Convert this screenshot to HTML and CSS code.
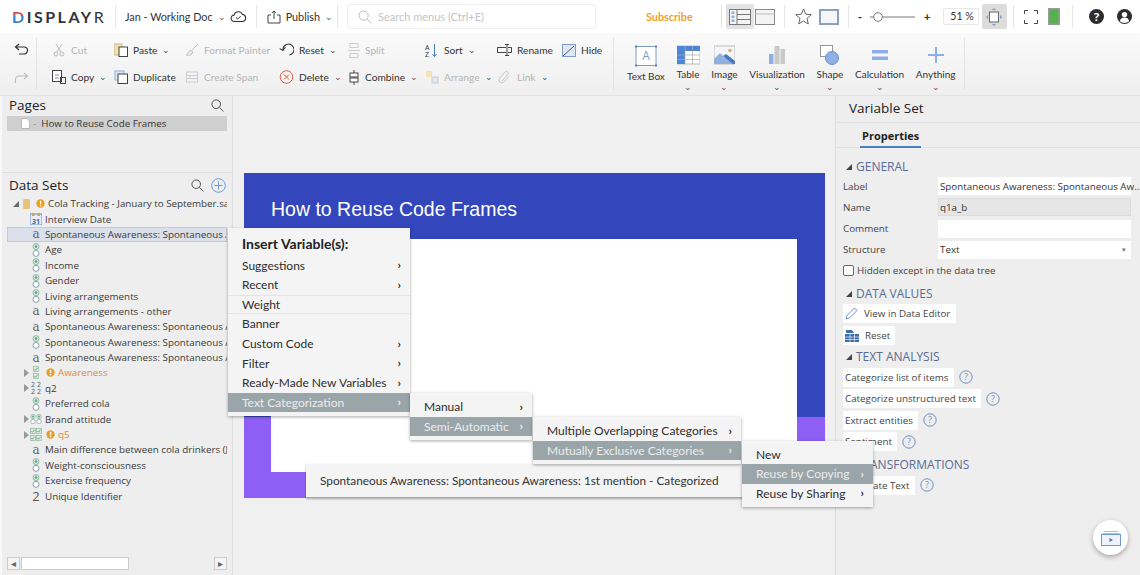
FILE: index.html
```html
<!DOCTYPE html>
<html lang="en">
<head>
    <meta charset="UTF-8">
    <title>Displayr</title>
    <link rel="stylesheet" href="styles.css">
</head>
<body>
<svg class="defs" width="0" height="0">
    <symbol id="radio" viewBox="0 0 8 14"><circle cx="4" cy="3.6" r="3" fill="#d8ecdf" stroke="#8fb8a4"/><circle cx="4" cy="3.6" r="1.3" fill="#5fa582"/><circle cx="4" cy="10.4" r="3" fill="#fff" stroke="#8aa0ad"/></symbol>
    <symbol id="warn" viewBox="0 0 10 10"><circle cx="5" cy="5" r="4.6" fill="#e8a020"/><rect x="4.3" y="2" width="1.5" height="3.8" fill="#fff"/><rect x="4.3" y="6.6" width="1.5" height="1.5" fill="#fff"/></symbol>
    <symbol id="help" viewBox="0 0 14 14"><circle cx="7" cy="7" r="6.2" fill="none" stroke="#6f8fc4"/><text x="7" y="10.2" text-anchor="middle" font-size="9" font-family="Open Sans" fill="#6f8fc4">?</text></symbol>
    <symbol id="check" viewBox="0 0 6 6"><rect x=".4" y=".4" width="5.2" height="5.2" fill="#dcebe0" stroke="#8fb8a4" stroke-width=".7"/><path d="M1.4 3l1.1 1.2L4.6 1.8" fill="none" stroke="#4f9a72" stroke-width=".8"/></symbol>
</svg>
<div class="app">
    <header class="topbar">
        <div class="logo"><span class="logo-d">D</span>ISPLAY<span class="logo-r">R</span></div>
        <span class="sep sep-doc"></span>
        <span class="doc-name">Jan - Working Doc</span><span class="caret">&#8964;</span>
        <svg class="cloud" width="17" height="13" viewBox="0 0 17 13"><path d="M4.5 11.5a3.2 3.2 0 0 1-.4-6.4 4.4 4.4 0 0 1 8.3-.7 3.6 3.6 0 0 1 .4 7.1z" fill="none" stroke="#333" stroke-width="1.1"/><path d="M6 7.5l1.7 1.6 3-3" fill="none" stroke="#333" stroke-width="1"/></svg>
        <span class="sep sep-pub"></span>
        <svg class="pub-icon" width="14" height="14" viewBox="0 0 14 14"><path d="M4 5H1v8h12V5h-3M7 9V1M4.8 3L7 1l2.2 2" fill="none" stroke="#444"/></svg>
        <span class="publish">Publish</span><span class="caret">&#8964;</span>
        <span class="sep sep-search"></span>
        <div class="search">
            <svg width="14" height="14" viewBox="0 0 14 14"><circle cx="5.6" cy="5.6" r="4.6" fill="none" stroke="#bbb"/><path d="M9 9l4.4 4.4" stroke="#bbb"/></svg>
            <span>Search menus (Ctrl+E)</span>
        </div>
        <span class="subscribe">Subscribe</span>
        <span class="sep sep-view"></span>
        <div class="view-btn view-on"><svg width="22" height="16" viewBox="0 0 22 16"><rect x=".5" y=".5" width="21" height="15" fill="#f4f4f4" stroke="#777"/><path d="M8 .5v15M8 5.5h13.5M8 10.500h13.500" stroke="#777"/><rect x="2.500" y="2.500" width="3" height="2.500" fill="#8fb0dc"/><rect x="2.500" y="6.500" width="3" height="2.500" fill="#8fb0dc"/><rect x="2.500" y="10.500" width="3" height="2.500" fill="#8fb0dc"/></svg></div>
        <svg class="view-two" width="20" height="16" viewBox="0 0 20 16"><rect x=".5" y=".5" width="19" height="15" fill="#f4f4f4" stroke="#888"/><path d="M.5 5h19" stroke="#bbb"/></svg>
        <span class="sep sep-star"></span>
        <svg class="star" width="17" height="17" viewBox="0 0 17 17"><path d="M8.500 1l2.200 5.200 5.600.5-4.300 3.700 1.300 5.500-4.800-2.900-4.800 2.900 1.300-5.500L.7 6.700l5.600-.5z" fill="none" stroke="#666"/></svg>
        <svg class="frame" width="20" height="16" viewBox="0 0 20 16"><rect x="1" y="1" width="18" height="14" fill="#f6f6f6" stroke="#8aa0c0" stroke-width="2"/></svg>
        <span class="sep sep-zoom"></span>
        <span class="zoom-sign">-</span>
        <svg class="slider" width="45" height="12" viewBox="0 0 45 12"><path d="M0 6h45" stroke="#777"/><circle cx="8" cy="6" r="4.300" fill="#fff" stroke="#777"/></svg>
        <span class="zoom-sign zoom-plus">+</span>
        <div class="zoom-box">51 %</div>
        <div class="fit-btn"><svg width="16" height="18" viewBox="0 0 16 18"><rect x="3.500" y="4" width="9" height="10" fill="#fff" stroke="#666"/><path d="M8 0L6 2h4zM8 18l-2-2h4zM0 9l2-2v4zM16 9l-2-2v4z" fill="#7f9cc8"/></svg></div>
        <span class="sep sep-full"></span>
        <svg class="fullscreen" width="14" height="14" viewBox="0 0 14 14"><path d="M.5 4V.5H4M10 .5h3.500V4M13.500 10v3.500H10M4 13.500H.5V10" fill="none" stroke="#444"/></svg>
        <svg class="battery" width="12" height="17" viewBox="0 0 12 17"><rect width="12" height="17" fill="#9a9a9a"/><rect x="1.500" y="1.500" width="9" height="14" fill="#58b04f"/></svg>
        <span class="sep sep-help"></span>
        <svg class="help-btn" width="15" height="15" viewBox="0 0 15 15"><circle cx="7.500" cy="7.500" r="7.500" fill="#2d2d2d"/><text x="7.500" y="11.500" text-anchor="middle" font-size="11" font-weight="700" font-family="Open Sans" fill="#fff">?</text></svg>
        <svg class="user-btn" width="15" height="15" viewBox="0 0 15 15"><circle cx="7.500" cy="7.500" r="7.500" fill="#2d2d2d"/><circle cx="7.500" cy="5.600" r="2.700" fill="#fff"/><path d="M2.800 12.300c.6-2.700 2.400-3.700 4.700-3.700s4.100 1 4.700 3.700a7 7 0 0 1-9.400 0z" fill="#fff"/></svg>
    </header>

    <section class="ribbon">
        <div class="history">
            <svg width="15" height="12" viewBox="0 0 15 12"><path d="M5 1L1.500 4 5 7M1.500 4H10a3.500 3.500 0 0 1 0 7H5" fill="none" stroke="#333" stroke-width="1.200"/></svg>
            <svg width="15" height="12" viewBox="0 0 15 12"><path d="M10 1l3.500 3L10 7M13.500 4H5a3.500 3.500 0 0 0-3.500 3.500V11" fill="none" stroke="#bbb" stroke-width="1.100"/></svg>
        </div>
        <div class="tools">
            <div class="tool off"><svg width="14" height="14" viewBox="0 0 14 14"><path d="M4 1l5 8M10 1L5 9" stroke="#bbb" fill="none"/><circle cx="4" cy="11" r="2" fill="none" stroke="#bbb"/><circle cx="10" cy="11" r="2" fill="none" stroke="#bbb"/></svg>Cut</div>
            <div class="tool"><svg width="14" height="14" viewBox="0 0 14 14"><rect x="0" y="1" width="8" height="11" fill="#f2dfae" stroke="#cdb98a"/><rect x="5" y="4" width="8.500" height="9.500" fill="#fff" stroke="#444"/></svg>Paste<span class="caret">&#8964;</span></div>
            <div class="tool off"><svg width="14" height="14" viewBox="0 0 14 14"><path d="M13 1L7 7M1 12c3 1 6 0 7-3L6 7c-3 1-3 4-5 5z" fill="#e8e8e8" stroke="#c4c4c4"/></svg>Format Painter</div>
            <div class="tool"><svg width="15" height="14" viewBox="0 0 15 14"><path d="M4 7a5.500 5.500 0 1 1 5.500 5.500M4 7L1 4.500M4 7l3-3" transform="rotate(-10 7 7)" fill="none" stroke="#333"/></svg>Reset<span class="caret">&#8964;</span></div>
            <div class="tool off"><svg width="12" height="15" viewBox="0 0 12 15"><rect x="2" y=".5" width="8" height="4" fill="none" stroke="#ccc"/><rect x="2" y="10.500" width="8" height="4" fill="none" stroke="#ccc"/><path d="M0 7.500h12" stroke="#ccc"/></svg>Split</div>
            <div class="tool"><svg width="14" height="15" viewBox="0 0 14 15"><text x="0" y="6.500" font-size="7" font-family="Open Sans" fill="#333">A</text><text x="0" y="14" font-size="7" font-family="Open Sans" fill="#333">Z</text><path d="M9.500 1v12M7.500 11l2 2.500 2-2.500" fill="none" stroke="#4a7fc0"/></svg>Sort<span class="caret">&#8964;</span></div>
            <div class="tool"><svg width="15" height="12" viewBox="0 0 15 12"><path d="M9 3.500H.5v5H9M11 3.500h3.500v5H11M8 .5h4M8 11.500h4M10 .5v11" fill="none" stroke="#444"/></svg>Rename</div>
            <div class="tool"><svg width="14" height="13" viewBox="0 0 14 13"><rect x=".5" y=".5" width="13" height="12" fill="#dfe9f6" stroke="#7f9cc8"/><path d="M1 12L12 2" stroke="#557"/></svg>Hide</div>

            <div class="tool"><svg width="14" height="14" viewBox="0 0 14 14"><rect x=".5" y=".5" width="9" height="11" fill="#fff" stroke="#444"/><path d="M3 8h4M3 5h4" stroke="#88a"/><rect x="7" y="6" width="5" height="6" fill="none" stroke="#444" transform="translate(1.500 1.500)"/></svg>Copy<span class="caret">&#8964;</span></div>
            <div class="tool"><svg width="14" height="14" viewBox="0 0 14 14"><rect x="1" y="1" width="9" height="9" fill="#dfe9f6" stroke="#8fb0dc"/><rect x="4" y="4" width="9.500" height="9.500" fill="#fff" stroke="#444"/></svg>Duplicate</div>
            <div class="tool off"><svg width="14" height="14" viewBox="0 0 14 14"><rect x="1.500" y="2" width="11" height="10" fill="#f4f4f4" stroke="#ccc"/><path d="M1.500 5.500h11M1.500 8.500h11M5 5.500v3" stroke="#ccc"/></svg>Create Span</div>
            <div class="tool"><svg width="15" height="14" viewBox="0 0 15 14"><circle cx="7.500" cy="7" r="6.300" fill="#fdf1ef" stroke="#d9604c"/><path d="M5 4.500l5 5M10 4.500l-5 5" stroke="#d9604c"/></svg>Delete<span class="caret">&#8964;</span></div>
            <div class="tool"><svg width="12" height="15" viewBox="0 0 12 15"><path d="M6 0v15" stroke="#444"/><rect x="2" y="3" width="8" height="4" fill="#fff" stroke="#444"/><rect x="2" y="8" width="8" height="4" fill="#fff" stroke="#444"/></svg>Combine<span class="caret">&#8964;</span></div>
            <div class="tool off"><svg width="14" height="14" viewBox="0 0 14 14"><rect x="1" y="1" width="6" height="6" fill="#f2e2b8"/><rect x="7" y="7" width="6" height="6" fill="#dfe9f6" stroke="#ccc"/></svg>Arrange<span class="caret">&#8964;</span></div>
            <div class="tool off"><svg width="15" height="14" viewBox="0 0 15 14"><path d="M5 11l6-7a1.800 1.800 0 0 0-2.600-2.300L2.500 8.500a2.800 2.800 0 0 0 4 3.800L12.500 6" fill="none" stroke="#c4c4c4"/></svg>Link<span class="caret">&#8964;</span></div>
        </div>
        <div class="insert">
            <div class="ins"><svg width="22" height="22" viewBox="0 0 22 22"><rect x="1" y="1.500" width="20" height="19" fill="#fff" stroke="#7f9cc8"/><rect y=".5" width="2" height="2" fill="#5f80b8"/><rect x="20" y=".5" width="2" height="2" fill="#5f80b8"/><rect y="19.500" width="2" height="2" fill="#5f80b8"/><rect x="20" y="19.500" width="2" height="2" fill="#5f80b8"/><text x="11" y="15" text-anchor="middle" font-size="12" font-family="Open Sans" fill="#7f9cc8">A</text></svg><span>Text Box</span></div>
            <div class="ins"><svg width="23" height="18" viewBox="0 0 23 18"><rect width="23" height="18" fill="#fff" stroke="#bbb"/><rect width="23" height="5" fill="#4d86d6"/><rect width="8" height="18" fill="#4d86d6"/><path d="M0 9h23M0 13.500h23M8 0v18M15.500 0v18" stroke="#aaa" stroke-width=".7"/></svg><span>Table</span><span class="caret">&#8964;</span></div>
            <div class="ins"><svg width="21" height="18" viewBox="0 0 21 18"><rect width="21" height="18" fill="#f4f6fa" stroke="#bbb"/><path d="M0 18V13l6-6 5 5 3-2 7 7v1z" fill="#8fb0e0"/><path d="M9 10l3-2 9 7v3h-2z" fill="#4d78b8"/><circle cx="16" cy="4.500" r="1.800" fill="#e0b060"/></svg><span>Image</span><span class="caret">&#8964;</span></div>
            <div class="ins"><svg width="16" height="18" viewBox="0 0 16 18"><rect y="8" width="4.500" height="10" fill="#8fb0e0"/><rect x="5.500" width="5" height="18" fill="#c9c9c9"/><rect x="11.500" y="3" width="4.500" height="15" fill="#c9c9c9"/></svg><span>Visualization</span><span class="caret">&#8964;</span></div>
            <div class="ins"><svg width="19" height="20" viewBox="0 0 19 20"><rect x=".5" y=".5" width="12" height="11" fill="#fff" stroke="#999"/><circle cx="12" cy="13" r="6.500" fill="#8fb0e6" stroke="#6d90cc"/></svg><span>Shape</span><span class="caret">&#8964;</span></div>
            <div class="ins"><svg width="16" height="18" viewBox="0 0 16 18"><rect y="4" width="16" height="3.500" fill="#8fb0e6"/><rect y="10.500" width="16" height="3.500" fill="#8fb0e6"/></svg><span>Calculation</span><span class="caret">&#8964;</span></div>
            <div class="ins"><svg width="16" height="18" viewBox="0 0 16 18"><path d="M8 1v16M0 9h16" stroke="#8fb0e6" stroke-width="2"/></svg><span>Anything</span><span class="caret">&#8964;</span></div>
        </div>
    </section>

    <main class="panes">
        <aside class="left">
            <div class="pages">
                <div class="pane-head">Pages
                    <svg width="13" height="13" viewBox="0 0 14 14"><circle cx="5.600" cy="5.600" r="4.600" fill="none" stroke="#444"/><path d="M9 9l4.400 4.400" stroke="#444"/></svg>
                </div>
                <div class="page-row">
                    <svg width="9" height="11" viewBox="0 0 9 11"><path d="M.5.500h5.500l2.500 2.500v7.500h-8z" fill="#fff" stroke="#b9b9b9"/></svg>
                    <span class="dash">-</span>How to Reuse Code Frames
                </div>
            </div>
            <div class="datasets">
                <div class="pane-head">Data Sets
                    <svg width="13" height="13" viewBox="0 0 14 14"><circle cx="5.600" cy="5.600" r="4.600" fill="none" stroke="#444"/><path d="M9 9l4.400 4.400" stroke="#444"/></svg>
                    <svg width="15" height="15" viewBox="0 0 15 15"><circle cx="7.500" cy="7.500" r="6.800" fill="none" stroke="#6f9ad8"/><path d="M7.500 3.500v8M3.500 7.500h8" stroke="#6f9ad8"/></svg>
                </div>
                <ul class="tree">
                    <li class="root"><i class="open"></i><svg class="db" width="7" height="10" viewBox="0 0 7 10"><rect width="7" height="10" rx="1.500" fill="#e8c27a"/></svg><svg class="w" width="9" height="9"><use href="#warn"/></svg>Cola Tracking - January to September.sav</li>
                    <li><svg class="ic date" width="12" height="12" viewBox="0 0 12 12"><rect y="1" width="12" height="11" fill="#e6eef8" stroke="#5f8fc8"/><rect x="2" width="2.500" height="3" fill="#d8a040"/><rect x="7.500" width="2.500" height="3" fill="#d8a040"/><text x="6" y="10.500" text-anchor="middle" font-size="7" font-weight="700" font-family="Open Sans" fill="#3a6fb0">31</text></svg>Interview Date</li>
                    <li class="sel"><span class="ic txt">a</span>Spontaneous Awareness: Spontaneous Awareness: 1st mention</li>
                    <li><svg class="ic" width="12" height="14"><use href="#radio"/></svg>Age</li>
                    <li><svg class="ic" width="12" height="14"><use href="#radio"/></svg>Income</li>
                    <li><svg class="ic" width="12" height="14"><use href="#radio"/></svg>Gender</li>
                    <li><svg class="ic" width="12" height="14"><use href="#radio"/></svg>Living arrangements</li>
                    <li><span class="ic txt">a</span>Living arrangements - other</li>
                    <li><span class="ic txt">a</span>Spontaneous Awareness: Spontaneous Awareness: 2nd mention</li>
                    <li><svg class="ic" width="12" height="14"><use href="#radio"/></svg>Spontaneous Awareness: Spontaneous Awareness: 3rd mention</li>
                    <li><span class="ic txt">a</span>Spontaneous Awareness: Spontaneous Awareness: 4th mention</li>
                    <li class="warned"><i class="closed"></i><span class="ic stack"><svg width="6" height="6"><use href="#check"/></svg><svg width="6" height="6"><use href="#check"/></svg></span><svg class="w" width="9" height="9"><use href="#warn"/></svg>Awareness</li>
                    <li><i class="closed"></i><span class="ic nums">2 2<br>2 2</span>q2</li>
                    <li><svg class="ic" width="12" height="14"><use href="#radio"/></svg>Preferred cola</li>
                    <li><i class="closed"></i><svg class="ic" width="13" height="14" viewBox="0 0 16 14"><use href="#radio" width="8" height="14"/><use href="#radio" x="8" width="8" height="14"/></svg>Brand attitude</li>
                    <li class="warned"><i class="closed"></i><span class="ic grid"><svg width="6" height="6"><use href="#check"/></svg><svg width="6" height="6"><use href="#check"/></svg><svg width="6" height="6"><use href="#check"/></svg><svg width="6" height="6"><use href="#check"/></svg></span><svg class="w" width="9" height="9"><use href="#warn"/></svg>q5</li>
                    <li><span class="ic txt">a</span>Main difference between cola drinkers (Jan to Sep)</li>
                    <li><svg class="ic" width="12" height="14"><use href="#radio"/></svg>Weight-consciousness</li>
                    <li><svg class="ic" width="12" height="14"><use href="#radio"/></svg>Exercise frequency</li>
                    <li><span class="ic num">2</span>Unique Identifier</li>
                </ul>
            </div>
            <div class="hscroll">
                <span class="arrow">&#9666;</span><span class="thumb"></span><span class="arrow arrow-r">&#9656;</span>
            </div>
        </aside>

        <section class="canvas">
            <div class="slide">
                <h1>How to Reuse Code Frames</h1>
                <div class="slide-body"></div>
            </div>
        </section>

        <aside class="right">
            <div class="right-title">Variable Set</div>
            <div class="tabs"><span class="tab">Properties</span></div>
            <div class="props">
                <h2 class="group">GENERAL</h2>
                <div class="form">
                    <label>Label</label><div class="field">Spontaneous Awareness: Spontaneous Aw...</div>
                    <label>Name</label><div class="field locked">q1a_b</div>
                    <label>Comment</label><div class="field"></div>
                    <label>Structure</label><div class="field select">Text<span>&#9662;</span></div>
                </div>
                <div class="hidden-row"><span class="box"></span>Hidden except in the data tree</div>
                <h2 class="group">DATA VALUES</h2>
                <div class="btn-row"><div class="btn"><svg width="13" height="13" viewBox="0 0 13 13"><path d="M1 12l1-3.500L9.500 1 12 3.500 4.500 11z" fill="none" stroke="#6f8fc4"/></svg><span class="gap-a">View in Data Editor</span></div></div>
                <div class="btn-row"><div class="btn"><svg width="14" height="13" viewBox="0 0 14 13"><rect y="5" width="14" height="8" fill="#3f6fa8"/><path d="M0 8h14M0 10.500h14M5 5v8M9.500 5v8" stroke="#fff" stroke-width=".6"/><path d="M1 1h6l2 3H1z" fill="#3f6fa8"/></svg><span class="gap-b">Reset</span></div></div>
                <h2 class="group">TEXT ANALYSIS</h2>
                <div class="btn-row"><div class="btn">Categorize list of items</div><svg width="14" height="14"><use href="#help"/></svg></div>
                <div class="btn-row"><div class="btn">Categorize unstructured text</div><svg width="14" height="14"><use href="#help"/></svg></div>
                <div class="btn-row"><div class="btn">Extract entities</div><svg width="14" height="14"><use href="#help"/></svg></div>
                <div class="btn-row"><div class="btn">Sentiment</div><svg width="14" height="14"><use href="#help"/></svg></div>
                <h2 class="group group-low">TRANSFORMATIONS</h2>
                <div class="btn-row"><div class="btn">Translate Text</div><svg width="14" height="14"><use href="#help"/></svg></div>
            </div>
        </aside>
    </main>

    <div class="menu menu-main">
        <div class="menu-title">Insert Variable(s):</div>
        <div class="item">Suggestions<b>&#8250;</b></div>
        <div class="item">Recent<b>&#8250;</b></div>
        <div class="item ruled">Weight</div>
        <div class="item">Banner</div>
        <div class="item">Custom Code<b>&#8250;</b></div>
        <div class="item">Filter<b>&#8250;</b></div>
        <div class="item">Ready-Made New Variables<b>&#8250;</b></div>
        <div class="item on">Text Categorization<b>&#8250;</b></div>
    </div>
    <div class="menu menu-two">
        <div class="item">Manual<b>&#8250;</b></div>
        <div class="item on">Semi-Automatic<b>&#8250;</b></div>
    </div>
    <div class="tip">Spontaneous Awareness: Spontaneous Awareness: 1st mention - Categorized</div>
    <div class="menu menu-three">
        <div class="item">Multiple Overlapping Categories<b>&#8250;</b></div>
        <div class="item on">Mutually Exclusive Categories<b>&#8250;</b></div>
    </div>
    <div class="menu menu-four">
        <div class="item">New</div>
        <div class="item on">Reuse by Copying<b>&#8250;</b></div>
        <div class="item">Reuse by Sharing<b>&#8250;</b></div>
    </div>
    <div class="fab"><svg width="20" height="17" viewBox="0 0 20 17"><path d="M3 2.500h14M1.500 4.500h17" stroke="#a9c2ea"/><rect x=".5" y="5.500" width="19" height="11" fill="#eef3fb" stroke="#6f9ad8"/><path d="M8.500 9l3.500 2-3.500 2z" fill="#4d78b8"/></svg></div>
</div>
</body>
</html>
```

FILE: styles.css
```css
* {
    box-sizing: border-box;
}
body {
    margin: 0;
    overflow: hidden;
    background-color: #fff;
    color: #333;
    font-family: 'Lato', sans-serif;
}
.defs {
    position: absolute;
}
.app {
    position: relative;
    width: 1140px;
    height: 575px;
    display: flex;
    flex-direction: column;
    overflow: hidden;
}
.caret {
    font-size: 9px;
    line-height: 6px;
    color: #555;
    margin-left: 5px;
}

/* top bar */
.topbar {
    height: 33px;
    flex: none;
    display: flex;
    align-items: center;
    padding-left: 12px;
    font-size: 10.800px;
    background-color: #fff;
}
.topbar > * {
    flex: none;
    white-space: nowrap;
}
.sep {
    width: 1px;
    height: 23px;
    background-color: #e6e6e6;
}
.logo {
    width: 93px;
    font-size: 16px;
    font-weight: 700;
    letter-spacing: 2.500px;
    color: #2f3440;
}
.logo-d {
    background: linear-gradient(#c8514f 50%, #2f7fd0 50%);
    -webkit-background-clip: text;
    background-clip: text;
    color: transparent;
}
.logo-r {
    font-weight: 400;
}
.sep-doc {
    margin-left: 10px;
}
.doc-name {
    margin-left: 9px;
}
.cloud {
    margin-left: 4px;
}
.sep-pub {
    margin-left: 9px;
}
.pub-icon {
    margin-left: 10px;
}
.publish {
    margin-left: 5px;
}
.sep-search {
    margin-left: 4px;
}
.search {
    width: 249px;
    height: 25px;
    margin-left: 9px;
    display: flex;
    align-items: center;
    gap: 6px;
    padding-left: 10px;
    border: 1px solid #eee;
    border-radius: 3px;
    color: #c4c4c4;
    font-size: 11px;
}
.subscribe {
    margin-left: 50px;
    color: #f0a030;
    font-weight: 700;
}
.sep-view {
    margin-left: 28px;
}
.view-btn {
    width: 28px;
    height: 25px;
    margin-left: 4px;
    display: flex;
    align-items: center;
    justify-content: center;
}
.view-on {
    background-color: #e2e2e2;
    border-radius: 2px;
}
.view-two {
    margin-left: 1px;
}
.sep-star {
    margin-left: 9px;
}
.star {
    margin-left: 10px;
}
.frame {
    margin-left: 7px;
}
.sep-zoom {
    margin-left: 9px;
}
.zoom-sign {
    margin-left: 9px;
    width: 6px;
    font-size: 12px;
    font-weight: 700;
}
.zoom-plus {
    margin-left: 9px;
    margin-right: 13px;
}
.slider {
    margin-left: 6px;
}
.zoom-box {
    width: 36px;
    height: 17px;
    border: 1px solid #e8e8e8;
    border-radius: 2px;
    font-size: 10.500px;
    line-height: 15px;
    text-align: right;
    padding-right: 4px;
}
.fit-btn {
    width: 25px;
    height: 25px;
    margin-left: 3px;
    background-color: #dcdcdc;
    border-radius: 2px;
    display: flex;
    align-items: center;
    justify-content: center;
}
.sep-full {
    margin-left: 6px;
}
.fullscreen {
    margin-left: 10px;
}
.battery {
    margin-left: 10px;
}
.sep-help {
    margin-left: 12px;
}
.help-btn {
    margin-left: 16px;
}
.user-btn {
    margin-left: 13px;
}

/* ribbon */
.ribbon {
    height: 63px;
    flex: none;
    display: flex;
    background: linear-gradient(#fafafa, #efefef);
    border-bottom: 1px solid #e2e2e2;
    font-size: 10.200px;
}
.history {
    width: 37px;
    margin: 5px 0;
    padding: 5px 0 6px 14px;
    display: flex;
    flex-direction: column;
    justify-content: space-between;
    border-right: 1px solid #e2e2e2;
}
.tools {
    width: 577px;
    padding: 4px 0 0 15px;
    margin: 5px 0;
    display: grid;
    grid-template-columns: 62px 71px 94px 69px 77px 72px 65px 52px;
    grid-auto-rows: 27px;
    border-right: 1px solid #e2e2e2;
}
.tool {
    display: flex;
    align-items: center;
    height: 16px;
    white-space: nowrap;
    color: #333;
}
.tool svg {
    flex: none;
    margin-right: 5px;
}
.tool.off {
    color: #b5b5b5;
}
.insert {
    width: 351px;
    margin: 5px 0;
    padding: 7px 0 0 13px;
    display: flex;
    gap: 11.700px;
    font-size: 10px;
    border-right: 1px solid #e2e2e2;
}
.ins {
    display: flex;
    flex-direction: column;
    align-items: center;
    white-space: nowrap;
}
.ins svg {
    height: 22px;
    margin-bottom: 3px;
}
.ins .caret {
    margin: 4px 0 0;
}

/* panes */
.panes {
    flex: 1;
    min-height: 0;
    display: flex;
}
.left {
    width: 233px;
    flex: none;
    display: flex;
    flex-direction: column;
    background-color: #eee;
    border-right: 1px solid #ddd;
    border-left: 2px solid #f8f8f8;
    font-family: 'Open Sans', sans-serif;
}
.pages {
    height: 77px;
    flex: none;
    padding: 0 5px;
    border-bottom: 1px solid #dfdfdf;
}
.pane-head {
    height: 18px;
    display: flex;
    align-items: center;
    gap: 7px;
    padding: 0 3px 0 2px;
    font-size: 13.500px;
    color: #222;
}
.pane-head svg:first-of-type {
    margin-left: auto;
}
.page-row {
    height: 15px;
    margin-top: 2px;
    display: flex;
    align-items: center;
    background-color: #cfcfcf;
    padding-left: 14px;
    font-size: 9.800px;
    white-space: nowrap;
}
.dash {
    margin: 0 5px 0 3px;
    color: #888;
}
.datasets {
    padding: 3px 0 0 5px;
}
.datasets .pane-head {
    padding-right: 6px;
}
.tree {
    list-style: none;
    margin: 2px 0 0;
    padding: 0;
}
.tree li {
    width: 220px;
    height: 15.400px;
    padding-left: 23px;
    position: relative;
    display: flex;
    align-items: center;
    overflow: hidden;
    white-space: nowrap;
    font-size: 9.800px;
    color: #3a3a3a;
}
.tree li > * {
    flex: none;
}
.tree .root {
    padding-left: 6px;
}
.tree .sel {
    background-color: #dbe0ea;
    outline: 1px solid #c9c9c9;
    outline-offset: -1px;
}
.tree .warned {
    color: #e08a3a;
}
.open {
    width: 0;
    height: 0;
    margin-right: 4px;
    border-left: 6px solid transparent;
    border-bottom: 6px solid #666;
}
.closed {
    position: absolute;
    left: 17px;
    width: 0;
    height: 0;
    border-top: 4px solid transparent;
    border-bottom: 4px solid transparent;
    border-left: 5px solid #999;
}
.db {
    margin-right: 6px;
}
.w {
    margin-right: 3px;
}
.ic {
    width: 12px;
    margin-right: 3px;
    text-align: center;
}
.txt {
    font-family: 'DejaVu Serif', serif;
    font-size: 12px;
    color: #666;
    line-height: 14px;
}
.num {
    font-size: 13px;
    color: #555;
}
.nums {
    font-size: 7px;
    line-height: 7px;
    white-space: normal;
    color: #555;
}
.stack {
    display: flex;
    flex-direction: column;
    align-items: center;
    gap: 1px;
    margin-right: 4px;
}
.grid {
    display: grid;
    grid-template-columns: 6px 6px;
    gap: 1px 0;
    margin-right: 4px;
}
.stack svg,
.grid svg {
    display: block;
}
.hscroll {
    margin-top: auto;
    margin-bottom: 5px;
    margin-left: 5px;
    width: 220px;
    height: 13px;
    display: flex;
    align-items: stretch;
    font-size: 10px;
    color: #666;
}
.arrow {
    width: 13px;
    background-color: #f4f4f4;
    border: 1px solid #ccc;
    line-height: 10px;
    text-align: center;
}
.arrow-r {
    margin-left: auto;
}
.thumb {
    width: 108px;
    margin-left: 1px;
    background-color: #fff;
    border: 1px solid #ccc;
}

/* canvas */
.canvas {
    flex: 1;
    background-color: #f0f0f0;
    padding: 77px 10px 0 11px;
}
.slide {
    height: 325px;
    display: flex;
    flex-direction: column;
    padding: 0 28px 26px 27px;
    background: linear-gradient(#3346bb 244px, #8f5ff5 244px);
}
.slide h1 {
    height: 66px;
    margin: 0;
    flex: none;
    font-family: 'Liberation Sans', sans-serif;
    font-size: 19.500px;
    font-weight: 400;
    line-height: 72px;
    color: #fff;
}
.slide-body {
    flex: 1;
    background-color: #fff;
}

/* right pane */
.right {
    width: 305px;
    flex: none;
    background-color: #eee;
    border-left: 1px solid #ddd;
    font-family: 'Open Sans', sans-serif;
    font-size: 9.800px;
    color: #444;
}
.right-title {
    height: 27px;
    padding: 3px 0 0 13px;
    border-bottom: 1px solid #e2e2e2;
    font-size: 13.500px;
    color: #222;
}
.tabs {
    height: 25px;
    padding-left: 24px;
    border-bottom: 1px solid #e2e2e2;
}
.tab {
    display: inline-block;
    height: 25px;
    padding: 5px 2px 0;
    border-bottom: 2px solid #4a7fc0;
    font-size: 11px;
    font-weight: 700;
    color: #222;
}
.props {
    padding: 10px 0 0 7px;
}
.group {
    position: relative;
    margin: 0;
    padding-left: 13px;
    height: 18px;
    font-size: 12px;
    line-height: 18px;
    font-weight: 400;
    color: #5a6b95;
}
.group::before {
    content: "";
    position: absolute;
    left: 3px;
    top: 6px;
    border-left: 6px solid transparent;
    border-bottom: 6px solid #444;
}
.form {
    width: 288px;
    margin-top: 1px;
    display: grid;
    grid-template-columns: 95px 193px;
    row-gap: 3.300px;
    align-items: center;
}
.field {
    height: 18px;
    padding-left: 2px;
    display: flex;
    align-items: center;
    justify-content: space-between;
    background-color: #fff;
    white-space: nowrap;
    color: #333;
}
.locked {
    background-color: #e6e6e6;
    outline: 1px solid #dcdcdc;
    outline-offset: -1px;
}
.select span {
    margin-right: 5px;
    font-size: 7px;
    color: #777;
}
.hidden-row {
    height: 16px;
    margin-top: 4px;
    display: flex;
    align-items: center;
    gap: 3px;
}
.box {
    width: 11px;
    height: 11px;
    background-color: #fff;
    border: 1px solid #666;
    border-radius: 2px;
}
.hidden-row + .group {
    margin-top: 6px;
}
.btn-row {
    display: flex;
    align-items: center;
    gap: 5px;
    margin-top: 2.600px;
}
.group + .btn-row {
    margin-top: 1.400px;
}
.btn {
    height: 19px;
    padding: 0 5px 0 2px;
    display: flex;
    align-items: center;
    background-color: #fff;
    white-space: nowrap;
}
.btn-row + .group {
    margin-top: 3.400px;
}
.btn-row + .group-low {
    margin-top: 5px;
}
.gap-a {
    margin: 0 1px 0 6px;
}
.gap-b {
    margin: 0 0 0 6px;
}

/* popup menus */
.menu {
    position: absolute;
    background-color: #f4f4f4;
    box-shadow: 0 1px 3px rgba(0, 0, 0, 0.35);
    font-size: 12px;
    color: #2e2e2e;
}
.menu-main {
    left: 228px;
    top: 228px;
    width: 182px;
    height: 188px;
}
.menu-title {
    height: 27.400px;
    padding: 7px 0 0 14px;
    font-size: 14px;
    line-height: 17px;
    font-weight: 700;
    color: #222;
}
.item {
    height: 19.600px;
    display: flex;
    align-items: center;
    justify-content: space-between;
    padding: 0 9px 0 14px;
    white-space: nowrap;
}
.item b {
    font-size: 12px;
    line-height: 12px;
}
.item.on {
    background-color: #9aa5aa;
    color: #ececec;
}
.ruled {
    border-top: 1px solid #e4e4e4;
    border-bottom: 1px solid #e4e4e4;
}
.menu-two {
    left: 410px;
    top: 393px;
    width: 122px;
    padding: 4px 0;
}
.menu-three {
    left: 533px;
    top: 417px;
    width: 208px;
    padding: 4px 0;
}
.menu-four {
    left: 742px;
    top: 441px;
    width: 131px;
    padding: 3.500px 0 4px;
}
.tip {
    position: absolute;
    left: 306px;
    top: 464px;
    width: 439px;
    height: 34px;
    padding-left: 14px;
    background-color: #f4f4f4;
    border-bottom: 1px solid #a99bd8;
    box-shadow: 0 1px 2px rgba(0, 0, 0, 0.3);
    font-size: 11.800px;
    line-height: 33px;
    white-space: nowrap;
}
.fab {
    position: absolute;
    left: 1093px;
    top: 520px;
    width: 35px;
    height: 35px;
    display: flex;
    align-items: center;
    justify-content: center;
    border-radius: 50%;
    background-color: #fff;
    box-shadow: 0 2px 5px rgba(0, 0, 0, 0.3);
}
```
